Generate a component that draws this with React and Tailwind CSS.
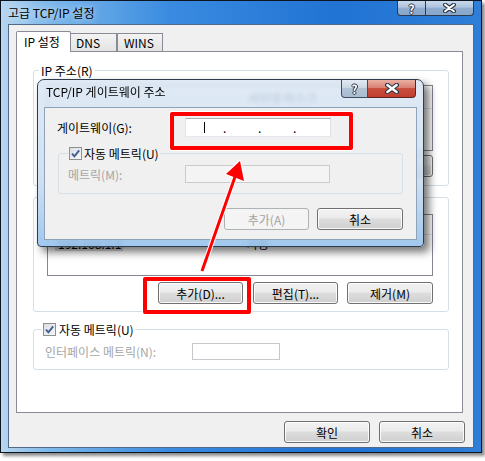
const btnOn =
  'border-[#707070] text-black bg-[linear-gradient(180deg,#f2f2f2_0%,#ebebeb_45%,#dddddd_50%,#cfcfcf_100%)] shadow-[inset_0_0_0_1px_rgba(255,255,255,0.85)]';
const btnOff = 'border-[#adb2b5] bg-[#f4f4f4] text-[#a3a3a3]';

function Btn({ children, disabled, className = '' }) {
  return (
    <div className={`flex items-center justify-center h-[22px] rounded-[3px] border ${disabled ? btnOff : btnOn} ${className}`}>
      {children}
    </div>
  );
}

function Check() {
  return (
    <span className="inline-flex w-[13px] h-[13px] shrink-0 items-center justify-center border border-[#8e8f8f] bg-[linear-gradient(135deg,#dcdee2,#f7f7f7)]">
      <svg width="11" height="11" viewBox="0 0 11 11">
        <path d="M2 5.6 L4.4 8.3 L9.2 2.4" fill="none" stroke="#3f5d93" strokeWidth="1.9" />
      </svg>
    </span>
  );
}

function Group({ legend, className = '', children }) {
  return (
    <fieldset className={`border border-[#d5dfe5] rounded-[3px] ${className}`}>
      <legend className="ml-[5px] px-[2px]">{legend}</legend>
      {children}
    </fieldset>
  );
}

function CapX({ w, h }) {
  return (
    <svg width={w} height={h} viewBox="0 0 12 9">
      <path d="M2 1.5 L10 7.5 M10 1.5 L2 7.5" stroke="#2b3443" strokeWidth="4" strokeLinecap="round" />
      <path d="M2 1.5 L10 7.5 M10 1.5 L2 7.5" stroke="#fff" strokeWidth="2" strokeLinecap="round" />
    </svg>
  );
}

const qShadow = '[text-shadow:1px_0_0_#2b3443,-1px_0_0_#2b3443,0_1px_0_#2b3443,0_-1px_0_#2b3443]';

function MainWindow() {
  return (
    <div className="w-[482px] h-[453px] flex flex-col px-[7px] pb-[4px] border border-[#0d1520] bg-[linear-gradient(90deg,#b8d6ef_0%,#7db8ea_10%,#3a8be0_35%,#2173d4_70%,#2f7fd8_100%)] shadow-[3px_3px_3px_rgba(0,0,0,0.45)]">
      {/* title bar */}
      <div className="h-[23px] shrink-0 flex justify-between items-start">
        <span className="pt-[4px] [text-shadow:0_0_6px_rgba(255,255,255,0.9)]">고급 TCP/IP 설정</span>
        <div className="flex">
          <div className={`w-[29px] h-[15px] flex items-center justify-center rounded-bl-[4px] border border-t-0 border-[#2c3b4e] bg-[linear-gradient(180deg,#c9d9ec_0%,#adc4de_45%,#90acce_50%,#88a7cb_100%)] text-white font-bold text-[12px] leading-[13px] ${qShadow}`}>
            ?
          </div>
          <div className="w-[48px] h-[15px] flex items-center justify-center rounded-br-[4px] border border-l-0 border-t-0 border-[#2c3b4e] bg-[linear-gradient(180deg,#c9d9ec_0%,#adc4de_45%,#90acce_50%,#88a7cb_100%)]">
            <CapX w={13} h={10} />
          </div>
        </div>
      </div>

      {/* client */}
      <div className="flex-1 flex flex-col border border-[#52698a] bg-[#f0f0f0] pt-[6px]">
        <div className="flex items-end h-[20px] pl-[7px]">
          <div className="relative z-10 -mb-px h-[21px] w-[55px] pl-[7px] pt-[2px] bg-white border border-b-0 border-[#898c95] rounded-t-[2px]">
            IP 설정
          </div>
          <div className="h-[18px] w-[46px] pl-[5px] pt-[1px] border border-l-0 border-b-0 border-[#898c95] bg-[linear-gradient(180deg,#f3f3f3,#e3e3e3)]">
            DNS
          </div>
          <div className="h-[18px] w-[46px] pl-[6px] pt-[1px] border border-b-0 border-[#898c95] bg-[linear-gradient(180deg,#f3f3f3,#e3e3e3)]">
            WINS
          </div>
        </div>

        <div className="ml-[7px] w-[447px] h-[362px] flex flex-col pt-[11px] pl-[16px] pr-[13px] border border-[#898c95] bg-white">
          <Group legend="IP 주소(R)">
            <div className="pt-[7px] pl-[13px] pr-[15px] pb-[8px]">
              {/* list mostly hidden by the dialog; only the header shows blurred through the glass */}
              <div className="h-[66px] border border-[#828790] bg-white">
                <div className="h-[23px] flex items-center border-b border-[#e5e5e5]">
                  <span className="w-[200px] shrink-0" />
                  <span className="text-[#3c4658]">서브넷 마스크</span>
                </div>
              </div>
              <div className="mt-[4px] flex justify-end">
                <Btn className="w-[85px]" />
                <Btn className="w-[85px] ml-[10px]" />
                <Btn className="w-[86px] ml-[9px]" />
              </div>
            </div>
          </Group>

          <fieldset className="mt-[4px] border border-[#d5dfe5] rounded-[3px]">
            <legend className="ml-[5px] px-[2px] h-[15px] w-[100px]" />
            <div className="pt-[9px] pl-[13px] pr-[15px] pb-[7px]">
              <div className="h-[62px] border border-[#828790] bg-white">
                <div className="h-[20px] border-b border-[#e5e5e5]" />
                <div className="h-[17px] flex items-center">
                  <div className="w-[199px] pl-[7px]">
                    <span className="inline-block w-[68px] pl-[3px] bg-[#d9d9d9]">192.168.1.1</span>
                  </div>
                  <span>자동</span>
                </div>
              </div>
              <div className="mt-[6px] flex justify-end">
                <Btn className="w-[85px]">추가(D)...</Btn>
                <Btn className="w-[85px] ml-[10px]">편집(T)...</Btn>
                <Btn className="w-[86px] ml-[9px]">제거(M)</Btn>
              </div>
            </div>
          </fieldset>

          <fieldset className="mt-[10px] border border-[#d5dfe5] rounded-[3px]">
            <legend className="ml-[8px] px-[1px]">
              <span className="flex items-center gap-[3px]">
                <Check />
                자동 메트릭(U)
              </span>
            </legend>
            <div className="pt-[6px] pb-[9px] pl-[11px] flex items-center">
              <span className="w-[147px] text-[#a6a6a6]">인터페이스 메트릭(N):</span>
              <div className="w-[88px] h-[17px] border border-[#c5c7cc] bg-white" />
            </div>
          </fieldset>
        </div>

        <div className="mt-[8px] flex justify-end gap-[9px] pr-[8px]">
          <Btn className="w-[86px]">확인</Btn>
          <Btn className="w-[86px]">취소</Btn>
        </div>
      </div>
    </div>
  );
}

function GatewayDialog() {
  return (
    <div className="absolute left-[37px] top-[79px] w-[387px] h-[168px] flex flex-col px-[6px] pb-[6px] rounded-t-[7px] rounded-b-[4px] border border-[#2f3d4f] backdrop-blur-[2px] bg-[linear-gradient(180deg,rgba(216,229,243,0.8)_0%,rgba(200,218,238,0.84)_60%,rgba(150,194,236,0.9)_100%)] shadow-[5px_5px_9px_rgba(0,0,0,0.55)]">
      <div className="h-[27px] shrink-0 flex justify-between items-start">
        <span className="pt-[4px] pl-[2px]">TCP/IP 게이트웨이 주소</span>
        <div className="flex mr-[1px]">
          <div className={`w-[27px] h-[18px] flex items-center justify-center rounded-bl-[4px] border border-t-0 border-[#3e4e62] bg-[linear-gradient(180deg,#e4ebf3_0%,#cbd7e4_45%,#b3c3d6_50%,#a9bcd0_100%)] text-white font-bold text-[12px] leading-[13px] ${qShadow}`}>
            ?
          </div>
          <div className="w-[48px] h-[18px] flex items-center justify-center rounded-br-[4px] border border-l-0 border-t-0 border-[#5e2520] bg-[linear-gradient(180deg,#eab0a4_0%,#d98174_45%,#c8503f_50%,#c13d30_100%)]">
            <CapX w={14} h={11} />
          </div>
        </div>
      </div>

      <div className="h-[133px] border border-[#8ea3b9] bg-[#f0f0f0]">
        <div className="pt-[10px] pl-[12px] flex items-center">
          <span className="w-[128px]">게이트웨이(G):</span>
          <div className="w-[146px] h-[19px] flex items-center border border-[#abadb3] border-l-[#e2e3ea] border-r-[#dbdfe6] border-b-[#e3e9ef] bg-white">
            <div className="w-[37px] flex justify-center">
              <div className="w-px h-[11px] bg-black" />
            </div>
            <span className="w-[2px]">.</span>
            <span className="w-[33px]" />
            <span className="w-[2px]">.</span>
            <span className="w-[33px]" />
            <span className="w-[2px]">.</span>
          </div>
        </div>

        <fieldset className="mt-[9px] mx-[13px] border border-[#d5dfe5] rounded-[3px]">
          <legend className="ml-[9px] px-[1px]">
            <span className="flex items-center gap-[2px]">
              <Check />
              자동 메트릭(U)
            </span>
          </legend>
          <div className="pt-[4px] pb-[10px] pl-[9px] flex items-center">
            <span className="w-[117px] text-[#a6a6a6]">메트릭(M):</span>
            <div className="w-[145px] h-[18px] border border-[#c9cbcf] bg-[#f4f4f4]" />
          </div>
        </fieldset>

        <div className="mt-[14px] pr-[13px] flex justify-end gap-[8px]">
          <Btn disabled className="w-[85px]">추가(A)</Btn>
          <Btn className="w-[86px]">취소</Btn>
        </div>
      </div>
    </div>
  );
}

export default function App() {
  return (
    <div className="relative w-[485px] h-[461px] overflow-hidden bg-white font-['Noto_Sans_CJK_KR','Noto_Sans',sans-serif] text-[12px] leading-[15px] text-black">
      <MainWindow />
      <GatewayDialog />

      {/* red annotation boxes */}
      <div className="absolute left-[170px] top-[112px] w-[183px] h-[38px] rounded-[2px] border-4 border-[#ff0000] ring-1 ring-white" />
      <div className="absolute left-[143px] top-[277px] w-[108px] h-[37px] rounded-[2px] border-4 border-[#ff0000] ring-1 ring-white" />

      {/* arrow */}
      <svg className="absolute left-0 top-0 pointer-events-none" width="485" height="461">
        <line x1="202" y1="271" x2="236" y2="174" stroke="#fff" strokeWidth="5" />
        <polygon points="240,161 244,181 226,174" fill="#fff" stroke="#fff" strokeWidth="2.5" strokeLinejoin="round" />
        <line x1="202" y1="271" x2="236" y2="174" stroke="#ff0000" strokeWidth="3" />
        <polygon points="240,161 244,181 226,174" fill="#ff0000" />
      </svg>
    </div>
  );
}
